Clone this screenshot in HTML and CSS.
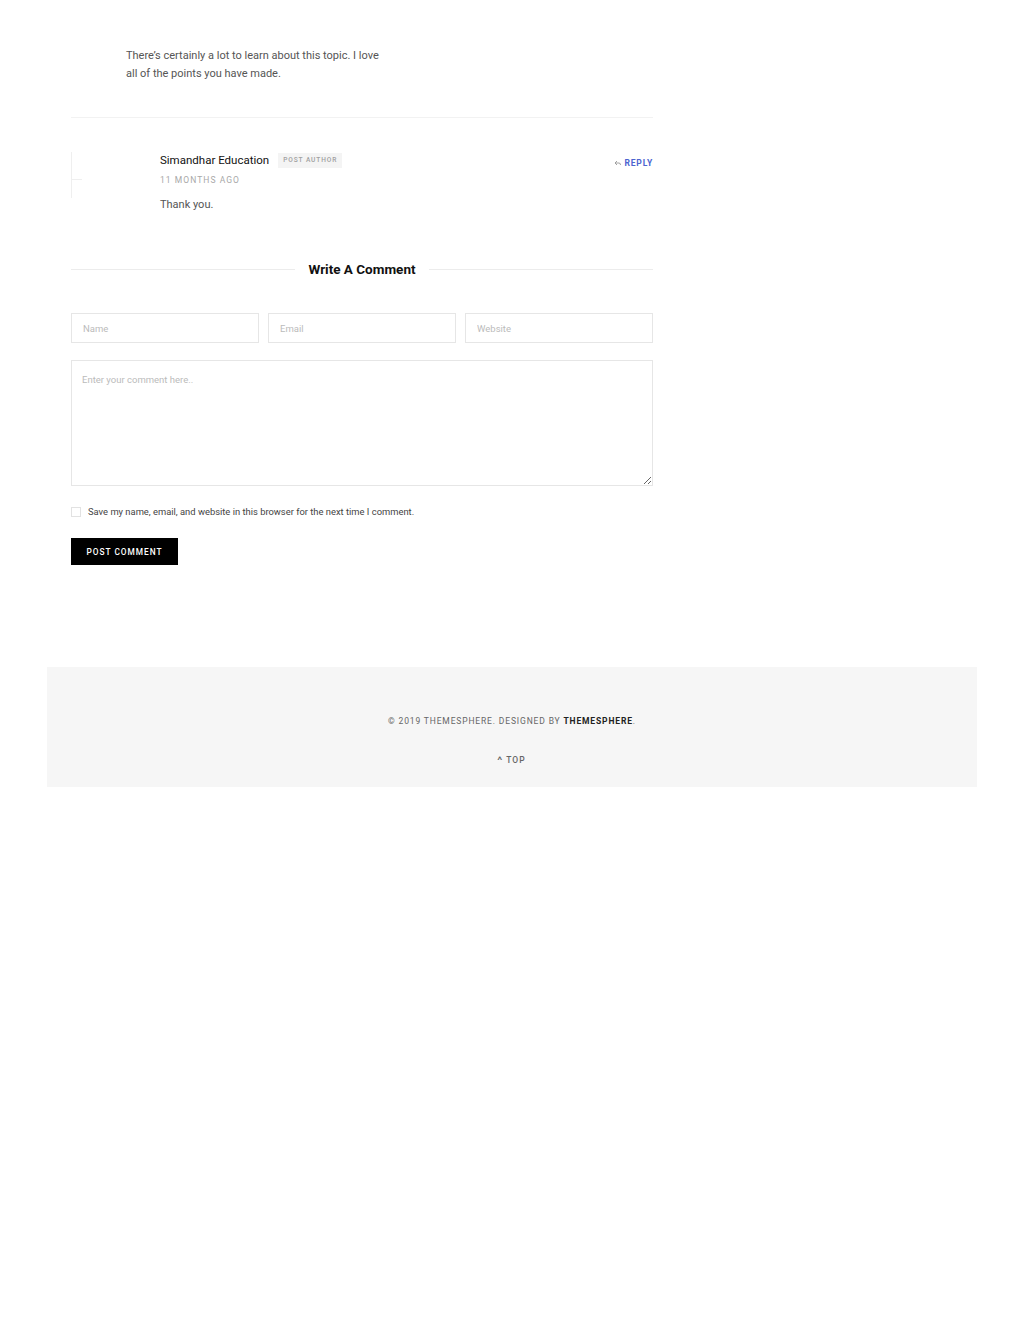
FILE: index.html
```html
<!DOCTYPE html>
<html lang="en">
  <head>
    <meta charset="utf-8">
    <title>Comments</title>
    <link rel="stylesheet" href="styles.css">
  </head>
  <body>
    <div class="wrap">
      <div class="main">
        <div class="comment first">
          <p class="comment-text">There’s certainly a lot to learn about this topic. I love all of the points you have made.</p>
        </div>

        <div class="comment child">
          <div class="comment-head">
            <span class="author">Simandhar Education</span>
            <span class="badge">Post Author</span>
            <a class="reply" href="#">
              <svg width="7" height="6" viewBox="0 0 7 6"><path d="M3 1 L1 3 L3 5 M1 3 H5 Q6.5 3 6.5 5" fill="none" stroke="#999" stroke-width="0.9"/></svg>
              Reply
            </a>
          </div>
          <div class="date">11 months ago</div>
          <p class="comment-text">Thank you.</p>
        </div>

        <div class="respond">
          <h3 class="respond-title"><span>Write A Comment</span></h3>
          <form class="comment-form">
            <div class="fields">
              <input type="text" placeholder="Name">
              <input type="text" placeholder="Email">
              <input type="text" placeholder="Website">
            </div>
            <textarea placeholder="Enter your comment here.."></textarea>
            <label class="cookies">
              <input type="checkbox">
              Save my name, email, and website in this browser for the next time I comment.
            </label>
            <button type="button" class="submit">Post Comment</button>
          </form>
        </div>
      </div>

      <footer class="footer">
        <p class="copyright">© 2019 ThemeSphere. Designed by <a href="#">ThemeSphere</a>.</p>
        <a class="top" href="#"><span class="caret">^</span> Top</a>
      </footer>
    </div>
  </body>
</html>
```

FILE: styles.css
```css
body { margin: 0; font-family: Roboto, "Liberation Sans", sans-serif; color: #555; background: #fff; }
a { text-decoration: none; }
.wrap { width: 930px; margin: 0 auto; }
.main { width: 582px; margin-left: 24px; padding-top: 47px; padding-bottom: 102px; }

.comment-text { margin: 0; font-size: 11px; line-height: 18px; color: #555; }
.first { padding: 0 0 34px 55px; border-bottom: 1px solid #f2f2f2; }
.first .comment-text { max-width: 262px; }

.child { position: relative; margin-top: 34px; padding-left: 89px; min-height: 46px; }
.child::before { content: ""; position: absolute; left: 0; top: 0; height: 46px; border-left: 1px solid #efefef; }
.child::after { content: ""; position: absolute; left: 0; top: 27px; width: 11px; border-top: 1px solid #efefef; }
.comment-head { display: flex; align-items: center; height: 16px; }
.author { font-size: 11.5px; font-weight: 400; color: #111; }
.badge { margin-left: 9px; padding: 0 5px; height: 15px; line-height: 15px; background: #f4f4f4; color: #a0a0a0; font-size: 6.6px; letter-spacing: 0.9px; text-transform: uppercase; font-weight: 500; }
.reply { margin-left: auto; margin-top: 6px; display: flex; align-items: center; gap: 4px; color: #4c64d0; font-size: 8.5px; font-weight: 700; letter-spacing: 0.8px; text-transform: uppercase; }
.date { margin-top: 7px; font-size: 8.5px; letter-spacing: 1.05px; color: #a8a8a8; text-transform: uppercase; }
.child .comment-text { margin-top: 11px; }

.respond { margin-top: 47px; }
.respond-title { display: flex; align-items: center; gap: 13px; margin: 0; font-size: 13.5px; font-weight: 700; color: #111; }
.respond-title::before, .respond-title::after { content: ""; flex: 1; border-top: 1px solid #ececec; }
.comment-form { margin-top: 36px; }
.fields { display: flex; gap: 9px; }
.fields input, .comment-form textarea { box-sizing: border-box; border: 1px solid #e6e6e6; font-family: inherit; font-size: 9.5px; color: #555; outline: none; }
.fields input { flex: 1; height: 30px; padding: 0 11px; }
.comment-form textarea { display: block; width: 100%; height: 126px; margin-top: 17px; padding: 13px 10px; resize: vertical; }
::placeholder { color: #bbb; }
.cookies { display: flex; align-items: center; gap: 7px; margin-top: 20px; font-size: 9.4px; color: #444; }
.cookies input { margin: 0; width: 10px; height: 10px; appearance: none; border: 1px solid #e2e2e2; }
.submit { margin-top: 21px; width: 107px; height: 27px; border: 0; background: #000; color: #fff; font-family: inherit; font-size: 8.3px; font-weight: 500; letter-spacing: 1px; text-transform: uppercase; }

.footer { background: #f6f6f6; height: 120px; padding-top: 49px; box-sizing: border-box; text-align: center; }
.copyright { margin: 0; font-size: 8.5px; letter-spacing: 0.85px; color: #666; text-transform: uppercase; }
.copyright a { color: #222; font-weight: 700; }
.top { display: inline-block; margin-top: 29px; font-size: 8.5px; letter-spacing: 1px; color: #666; text-transform: uppercase; font-weight: 500; }
.caret { display: inline-block; font-size: 9px; transform: scaleX(1.3); }
```
